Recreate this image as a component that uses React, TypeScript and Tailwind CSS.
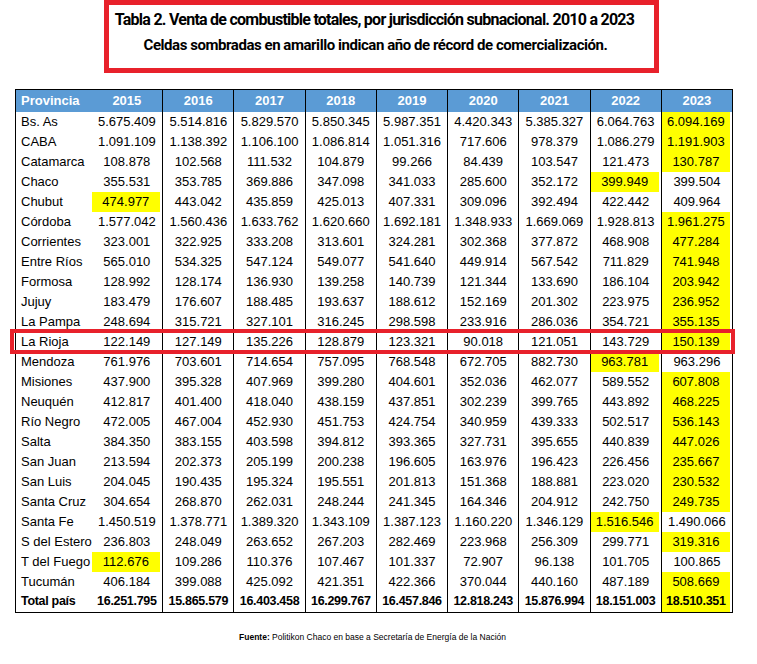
import React from "react";

type Row = { name: string; values: string[]; hl: number[]; total?: boolean };

const YEARS = ["2015", "2016", "2017", "2018", "2019", "2020", "2021", "2022", "2023"];

// hl = index (0 = 2015 ... 8 = 2023) of the record year cell(s)
const ROWS: Row[] = [
  { name: "Bs. As", values: ["5.675.409", "5.514.816", "5.829.570", "5.850.345", "5.987.351", "4.420.343", "5.385.327", "6.064.763", "6.094.169"], hl: [8] },
  { name: "CABA", values: ["1.091.109", "1.138.392", "1.106.100", "1.086.814", "1.051.316", "717.606", "978.379", "1.086.279", "1.191.903"], hl: [8] },
  { name: "Catamarca", values: ["108.878", "102.568", "111.532", "104.879", "99.266", "84.439", "103.547", "121.473", "130.787"], hl: [8] },
  { name: "Chaco", values: ["355.531", "353.785", "369.886", "347.098", "341.033", "285.600", "352.172", "399.949", "399.504"], hl: [7] },
  { name: "Chubut", values: ["474.977", "443.042", "435.859", "425.013", "407.331", "309.096", "392.494", "422.442", "409.964"], hl: [0] },
  { name: "Córdoba", values: ["1.577.042", "1.560.436", "1.633.762", "1.620.660", "1.692.181", "1.348.933", "1.669.069", "1.928.813", "1.961.275"], hl: [8] },
  { name: "Corrientes", values: ["323.001", "322.925", "333.208", "313.601", "324.281", "302.368", "377.872", "468.908", "477.284"], hl: [8] },
  { name: "Entre Ríos", values: ["565.010", "534.325", "547.124", "549.077", "541.640", "449.914", "567.542", "711.829", "741.948"], hl: [8] },
  { name: "Formosa", values: ["128.992", "128.174", "136.930", "139.258", "140.739", "121.344", "133.690", "186.104", "203.942"], hl: [8] },
  { name: "Jujuy", values: ["183.479", "176.607", "188.485", "193.637", "188.612", "152.169", "201.302", "223.975", "236.952"], hl: [8] },
  { name: "La Pampa", values: ["248.694", "315.721", "327.101", "316.245", "298.598", "233.916", "286.036", "354.721", "355.135"], hl: [8] },
  { name: "La Rioja", values: ["122.149", "127.149", "135.226", "128.879", "123.321", "90.018", "121.051", "143.729", "150.139"], hl: [8] },
  { name: "Mendoza", values: ["761.976", "703.601", "714.654", "757.095", "768.548", "672.705", "882.730", "963.781", "963.296"], hl: [7] },
  { name: "Misiones", values: ["437.900", "395.328", "407.969", "399.280", "404.601", "352.036", "462.077", "589.552", "607.808"], hl: [8] },
  { name: "Neuquén", values: ["412.817", "401.400", "418.040", "438.159", "437.851", "302.239", "399.765", "443.892", "468.225"], hl: [8] },
  { name: "Río Negro", values: ["472.005", "467.004", "452.930", "451.753", "424.754", "340.959", "439.333", "502.517", "536.143"], hl: [8] },
  { name: "Salta", values: ["384.350", "383.155", "403.598", "394.812", "393.365", "327.731", "395.655", "440.839", "447.026"], hl: [8] },
  { name: "San Juan", values: ["213.594", "202.373", "205.199", "200.238", "196.605", "163.976", "196.423", "226.456", "235.667"], hl: [8] },
  { name: "San Luis", values: ["204.045", "190.435", "195.324", "195.551", "201.813", "151.368", "188.881", "223.020", "230.532"], hl: [8] },
  { name: "Santa Cruz", values: ["304.654", "268.870", "262.031", "248.244", "241.345", "164.346", "204.912", "242.750", "249.735"], hl: [8] },
  { name: "Santa Fe", values: ["1.450.519", "1.378.771", "1.389.320", "1.343.109", "1.387.123", "1.160.220", "1.346.129", "1.516.546", "1.490.066"], hl: [7] },
  { name: "S del Estero", values: ["236.803", "248.049", "263.652", "267.203", "282.469", "223.968", "256.309", "299.771", "319.316"], hl: [8] },
  { name: "T del Fuego", values: ["112.676", "109.286", "110.376", "107.467", "101.337", "72.907", "96.138", "101.705", "100.865"], hl: [0] },
  { name: "Tucumán", values: ["406.184", "399.088", "425.092", "421.351", "422.366", "370.044", "440.160", "487.189", "508.669"], hl: [8] },
  { name: "Total país", values: ["16.251.795", "15.865.579", "16.403.458", "16.299.767", "16.457.846", "12.818.243", "15.876.994", "18.151.003", "18.510.351"], hl: [8], total: true },
];

export default function App() {
  return (
    <div className="w-[757px] h-[664px] bg-white text-black font-['Liberation_Sans',Arial,sans-serif] overflow-hidden">
      {/* title box */}
      <div className="ml-[104px] w-[555px] h-[73px] border-[5px] border-[#e8212b] flex flex-col items-center font-['Roboto',sans-serif] font-bold">
        <div className="mt-[4px] pr-[14px] text-[16px] leading-[21px] tracking-[-0.75px]">
          Tabla 2. Venta de combustible totales, por jurisdicción subnacional. 2010 a 2023
        </div>
        <div className="mt-[5px] pr-[12px] text-[15px] leading-[20px] tracking-[-0.45px]">
          Celdas sombradas en amarillo indican año de récord de comercialización.
        </div>
      </div>

      {/* table */}
      <div className="relative ml-[15px] mt-[16px] w-[718px]">
        <table className="w-[718px] table-fixed border-collapse border border-black text-[13px]">
          <colgroup>
            <col className="w-[76px]" />
            {YEARS.map((y) => (
              <col key={y} />
            ))}
          </colgroup>
          <thead>
            <tr className="h-[22px] bg-[#5b9bd5] text-white font-bold">
              <th className="pl-[5px] text-left font-bold">Provincia</th>
              {YEARS.map((y, i) => (
                <th key={y} className={i === 0 ? "text-center font-bold" : "text-center font-bold border-l border-black"}>
                  {y}
                </th>
              ))}
            </tr>
          </thead>
          <tbody>
            {ROWS.map((r) => (
              <tr key={r.name} className={r.total ? "h-[20px] font-bold text-[12.5px] tracking-[-0.3px]" : "h-[20px]"}>
                <td className="pl-[5px] whitespace-nowrap">{r.name}</td>
                {r.values.map((v, i) => (
                  <td key={i} className={i === 0 ? "p-0" : "p-0 border-l border-black"}>
                    <div
                      className={
                        r.hl.includes(i)
                          ? "h-[20px] mr-[2px] bg-[#ffff00] flex items-center justify-center"
                          : "h-[20px] flex items-center justify-center"
                      }
                    >
                      {v}
                    </div>
                  </td>
                ))}
              </tr>
            ))}
          </tbody>
        </table>
        {/* La Rioja highlight */}
        <div className="absolute left-[-5px] top-[240px] w-[725px] h-[25px] border-[4px] border-[#e8212b] pointer-events-none" />
      </div>

      {/* source */}
      <div className="w-[745px] mt-[19px] text-center text-[8.5px] leading-[11px]">
        <span className="font-bold">Fuente:</span> Politikon Chaco en base a Secretaría de Energía de la Nación
      </div>
    </div>
  );
}
